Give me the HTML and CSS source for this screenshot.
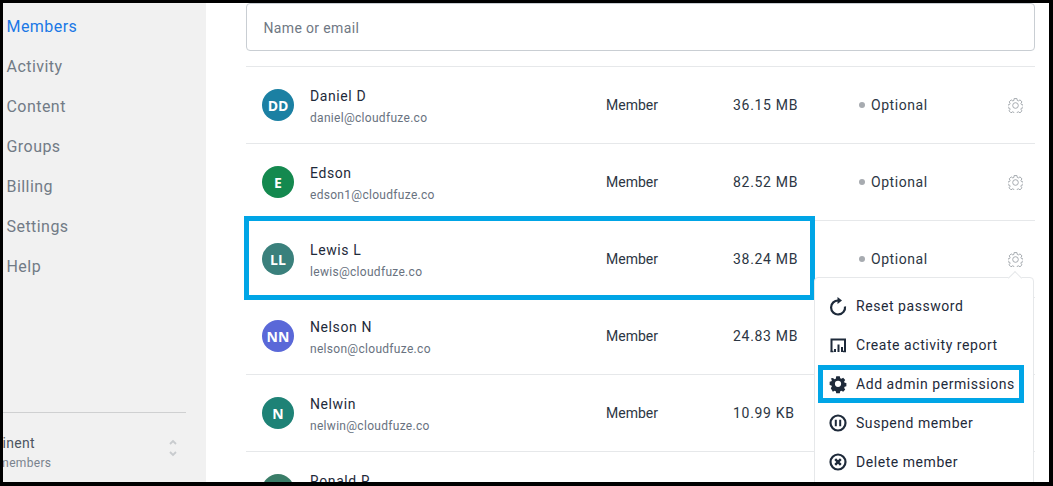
FILE: index.html
```html
<!DOCTYPE html>
<html lang="en">
<head>
<meta charset="utf-8">
<title>Members</title>
<link rel="stylesheet" href="styles.css">
</head>
<body>
<svg class="defs" width="0" height="0" aria-hidden="true">
  <symbol id="gear" viewBox="0 0 16 16">
    <path fill="none" stroke="currentColor" stroke-width="1" stroke-linejoin="round" d="M6.500.6h3l.4 2 1.200.5 1.700-1.100 2.100 2.100-1.100 1.700.5 1.200 2 .4v3l-2 .4-.5 1.200 1.100 1.700-2.100 2.100-1.700-1.100-1.200.5-.4 2h-3l-.4-2-1.200-.5-1.700 1.100-2.100-2.100 1.100-1.700-.5-1.200-2-.4v-3l2-.4.5-1.200L1.300 4.100l2.100-2.100 1.700 1.100 1.200-.5z"/>
    <circle cx="8" cy="8" r="3" fill="none" stroke="currentColor"/>
  </symbol>
</svg>
<div class="frame">
  <aside class="sidebar">
    <nav class="nav">
      <a class="nav-item active">Members</a>
      <a class="nav-item">Activity</a>
      <a class="nav-item">Content</a>
      <a class="nav-item">Groups</a>
      <a class="nav-item">Billing</a>
      <a class="nav-item">Settings</a>
      <a class="nav-item">Help</a>
    </nav>
    <div class="team">
      <div class="team-text">
        <div class="team-name">Continent</div>
        <div class="team-count">16 members</div>
      </div>
      <svg class="updown" width="8" height="18" viewBox="0 0 8 18"><path fill="none" stroke="currentColor" stroke-width="1.800" d="M1 5 4 2l3 3M1 13l3 3 3-3"/></svg>
    </div>
  </aside>
  <main class="main">
    <div class="search">Name or email</div>
    <div class="rows">
      <div class="row">
        <span class="avatar a-dd">DD</span>
        <div class="who"><div class="name">Daniel D</div><div class="email">daniel@cloudfuze.co</div></div>
        <span class="cell">Member</span><span class="cell size">36.15 MB</span>
        <span class="cell status"><i class="dot"></i>Optional</span>
        <svg class="gear"><use href="#gear"/></svg>
      </div>
      <div class="row">
        <span class="avatar a-e">E</span>
        <div class="who"><div class="name">Edson</div><div class="email">edson1@cloudfuze.co</div></div>
        <span class="cell">Member</span><span class="cell size">82.52 MB</span>
        <span class="cell status"><i class="dot"></i>Optional</span>
        <svg class="gear"><use href="#gear"/></svg>
      </div>
      <div class="row anchor">
        <span class="avatar a-ll">LL</span>
        <div class="who"><div class="name">Lewis L</div><div class="email">lewis@cloudfuze.co</div></div>
        <span class="cell">Member</span><span class="cell size">38.24 MB</span>
        <span class="cell status"><i class="dot"></i>Optional</span>
        <svg class="gear"><use href="#gear"/></svg>
        <div class="mark mark-row"></div>
        <div class="menu">
          <div class="menu-item">
            <svg class="mi" viewBox="0 0 18 18"><path fill="none" stroke="currentColor" stroke-width="2.200" d="M9.500 3.500A7 7 0 1 0 16 9.500"/><path fill="currentColor" d="M8.500 0v7l4.500-3.500z"/></svg>
            Reset password
          </div>
          <div class="menu-item">
            <svg class="mi" viewBox="0 0 18 18"><path fill="none" stroke="currentColor" stroke-width="2" d="M2.500 15.500V3.500h13.500v12"/><path fill="none" stroke="currentColor" stroke-width="2" d="M6 16v-3M9.500 16V8.500M13 16v-5"/><path fill="none" stroke="currentColor" stroke-width="1.500" d="M1.500 15.500h3M14 15.500h3"/></svg>
            Create activity report
          </div>
          <div class="menu-item">
            <svg class="mi" viewBox="0 0 18 18"><path fill="currentColor" fill-rule="evenodd" d="M7 .500h4l.5 2.200 1.300.6 2-1.200 2.300 2.500-1.200 1.800.5 1.300 2 .5v3.600l-2 .5-.5 1.300 1.200 1.800-2.300 2.500-2-1.200-1.300.6-.5 2.200H7l-.5-2.200-1.300-.6-2 1.200L.900 13.900l1.200-1.800-.5-1.300-2-.5V6.700l2-.5.5-1.300L.900 3.100l2.300-.5 2 1.200 1.300-.6zM9 5.500a3.500 3.500 0 1 0 0 7 3.500 3.500 0 0 0 0-7z" transform="translate(1 .8) scale(.89)"/></svg>
            Add admin permissions
          </div>
          <div class="menu-item">
            <svg class="mi" viewBox="0 0 18 18"><circle cx="9" cy="9" r="7.500" fill="none" stroke="currentColor" stroke-width="2.200"/><path stroke="currentColor" stroke-width="2" d="M6.800 5.800v6.400M11.200 5.800v6.400"/></svg>
            Suspend member
          </div>
          <div class="menu-item">
            <svg class="mi" viewBox="0 0 18 18"><circle cx="9" cy="9" r="7.500" fill="none" stroke="currentColor" stroke-width="2.200"/><path stroke="currentColor" stroke-width="2.400" d="m6.200 6.200 5.600 5.600M11.800 6.200l-5.600 5.600"/></svg>
            Delete member
          </div>
          <div class="mark mark-item"></div>
        </div>
      </div>
      <div class="row">
        <span class="avatar a-nn">NN</span>
        <div class="who"><div class="name">Nelson N</div><div class="email">nelson@cloudfuze.co</div></div>
        <span class="cell">Member</span><span class="cell size">24.83 MB</span>
      </div>
      <div class="row">
        <span class="avatar a-n">N</span>
        <div class="who"><div class="name">Nelwin</div><div class="email">nelwin@cloudfuze.co</div></div>
        <span class="cell">Member</span><span class="cell size">10.99 KB</span>
      </div>
      <div class="row">
        <span class="avatar a-rr">RR</span>
        <div class="who"><div class="name">Ronald R</div><div class="email">ronald@cloudfuze.co</div></div>
        <span class="cell">Member</span><span class="cell size">12.40 MB</span>
      </div>
    </div>
  </main>
</div>
</body>
</html>
```
FILE: styles.css
```css
* { box-sizing: border-box; }
html, body { margin: 0; padding: 0; background: #000; }
.defs { position: absolute; }
.frame {
  width: 1053px; height: 486px;
  border-style: solid; border-color: #000;
  border-width: 3px 4px 4px 3px;
  display: flex; overflow: hidden; background: #fff;
  font-family: Roboto, "Liberation Sans", sans-serif;
  color: #1e2a3a;
}
.sidebar {
  width: 203px; flex: none; background: #f1f1f1;
  display: flex; flex-direction: column; justify-content: space-between;
}
.nav { display: flex; flex-direction: column; padding: 4px 0 0 3.5px; }
.nav-item { height: 40px; line-height: 40px; font-size: 16px; letter-spacing: .45px; color: #717b86; }
.nav-item.active { color: #1a78e6; }
.team {
  margin-bottom: 17px; width: 183px; height: 53px;
  border-top: 1px solid #cfd0d1;
  display: flex; justify-content: space-between; align-items: flex-start;
  padding: 21px 9px 0 0;
}
.team-name { margin-left: -31px; font-size: 14px; line-height: 18px; letter-spacing: .3px; color: #4c5561; }
.team-count { margin-left: -22px; font-size: 12px; line-height: 18px; letter-spacing: .3px; color: #7a838e; margin-top: 2px; }
.updown { color: #c8cbce; margin-top: 5px; }
.main { flex: 1; padding: 0 14px 0 40px; min-width: 0; }
.search {
  height: 48px; border: 1px solid #c9ced3; border-radius: 4px;
  padding-left: 16.5px; line-height: 48px;
  font-size: 14px; letter-spacing: .35px; color: #6f7884;
}
.rows { margin-top: 15px; border-top: 1px solid #e6e8ea; }
.row {
  height: 77px; border-bottom: 1px solid #e6e8ea;
  display: grid; grid-template-columns: 32px 312px 127px 126px 149px 15px;
  align-items: center; padding-left: 16px;
}
.row > .who { margin-left: 16px; padding-top: 2px; }
.anchor { position: relative; }
.avatar {
  width: 32px; height: 32px; border-radius: 50%;
  display: flex; align-items: center; justify-content: center;
  color: #fff; font: bold 14px "Open Sans", sans-serif;
}
.a-dd { background: #1b80a3; }
.a-e { background: #14894f; }
.a-ll { background: #3a807c; }
.a-nn { background: #5a68d8; }
.a-n { background: #1e8276; }
.a-rr { background: #3a7d68; }
.name { font-size: 14px; line-height: 20px; letter-spacing: .6px; color: #1e2a3a; }
.email { font-size: 12px; line-height: 18px; letter-spacing: .3px; color: #697280; margin-top: 3px; }
.cell { font-size: 14px; letter-spacing: 0; color: #2c3643; }
.size { letter-spacing: .7px; }
.status { display: flex; align-items: center; gap: 6px; letter-spacing: .55px; }
.dot { width: 6px; height: 6px; border-radius: 50%; background: #a7abb0; }
.gear { width: 15px; height: 15px; color: #a0a5ab; }
.menu {
  position: absolute; z-index: 2; top: 56px; right: 1px; width: 220px;
  background: #fff; border: 1px solid #e6e8ea; border-radius: 4px;
  padding: 8px 0 10px;
}
.menu::before {
  content: ""; position: absolute; top: -5px; right: 13px; width: 9px; height: 9px;
  background: #fff; border: solid #e6e8ea; border-width: 1px 0 0 1px;
  transform: rotate(45deg);
}
.menu-item {
  height: 39px; display: flex; align-items: center; gap: 9px; padding-left: 14px;
  font-size: 14px; letter-spacing: .55px; color: #1e2a3a;
}
.mi { width: 18px; height: 18px; flex: none; color: #1e2a3a; overflow: visible; }
.mark { position: absolute; border: 5px solid #00a5e6; pointer-events: none; }
.mark-row { left: -2px; top: -5px; width: 571px; height: 84px; z-index: 1; }
.mark-item { left: 3px; top: 87px; width: 206px; height: 38px; }
```
